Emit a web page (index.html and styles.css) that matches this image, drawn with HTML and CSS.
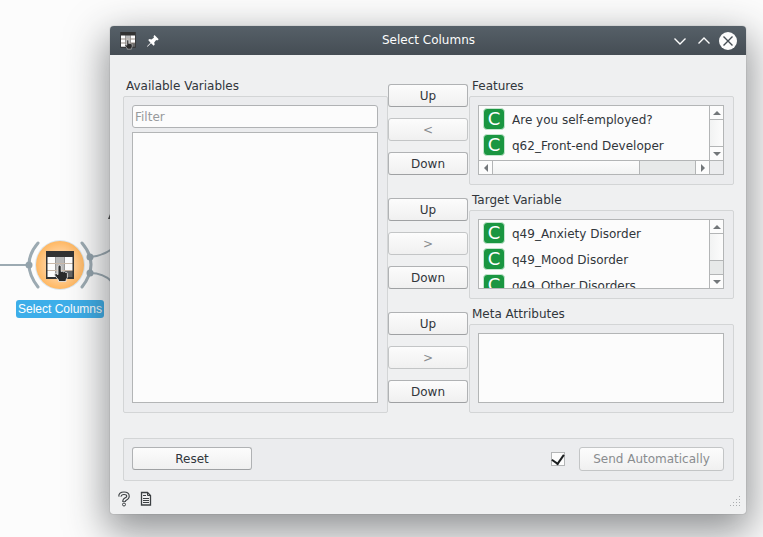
FILE: index.html
```
<!DOCTYPE html>
<html lang="en">
<head>
<meta charset="utf-8">
<title>Select Columns</title>
<link rel="stylesheet" href="styles.css">
</head>
<body>
<svg width="0" height="0" class="defs" aria-hidden="true">
  <symbol id="columns-icon" viewBox="0 0 28 32">
    <path fill="#333" d="M0 0h28v28H0z"/>
    <path fill="#fdfdfd" d="M1.500 6h8v6h-8zM1.500 13h8v6h-8zM1.500 20h8v6h-8zM18.500 6h8v6h-8zM18.500 13h8v6h-8z"/>
    <path fill="#b9b9b9" d="M10 6h8v20h-8z"/>
    <path fill="#666" d="M18.500 20h8v6h-8z"/>
    <path fill="#c9b8a8" d="M1.500 12h25v1h-25zM1.500 19h25v1h-25z"/>
    <path fill="#2b2b2b" stroke="#f4f4f4" stroke-width=".8" d="M12 15q1.500-1.800 3.200 0v5.500q1.200-.8 2.200.3 1.200-.7 2.200.6 1.400-.4 1.800.8v4.300L20 29v1.500h-7.500V29l-4-5q0-1.800 2-1.300l1.500 1z"/>
  </symbol>
</svg>

<div class="node">
  <svg class="node-art" width="112" height="90" viewBox="0 0 112 90" aria-hidden="true">
    <defs>
      <radialGradient id="disc"><stop offset="0" stop-color="#ffdcb2"/><stop offset="0.550" stop-color="#ffcf98"/><stop offset="1" stop-color="#ffb863"/></radialGradient>
    </defs>
    <g fill="none" stroke="#9caab2" stroke-width="2">
      <path d="M0 55h29M90 47q12-1 22-8M90 63q14 0 22 9"/>
      <path stroke-width="3" stroke-linecap="round" d="M38 33q-18 21 0 44M82 33q18 21 0 44"/>
    </g>
    <circle cx="29" cy="55" r="3.500" fill="#92a2ab"/>
    <circle cx="90" cy="47" r="3.500" fill="#92a2ab"/>
    <circle cx="90" cy="63" r="3.500" fill="#92a2ab"/>
    <circle cx="60" cy="55" r="25" fill="#dce6ee"/>
    <circle cx="60" cy="55" r="24" fill="url(#disc)"/>
    <use href="#columns-icon" x="46" y="41" width="28" height="32"/>
    <path d="M108 9l2-5h2v5z" fill="#444"/>
  </svg>
  <span class="node-label">Select Columns</span>
</div>

<main class="window">
  <header class="titlebar">
    <div class="tools">
      <svg width="16" height="18" viewBox="0 0 28 32" aria-hidden="true"><use href="#columns-icon"/></svg>
      <svg width="14" height="14" viewBox="0 0 14 14" aria-hidden="true"><path fill="#fff" d="M8.500 1L12.700 5.200 11.200 6.500 10.200 6 8.200 8.500 8.700 10.500 7.700 11.700 5 9.200 1.500 12.700 1 12.200 4.500 8.700 2.200 6 3.500 5 5.500 5.500 8 3.500 7.500 2.300z"/></svg>
    </div>
    <h1>Select Columns</h1>
    <div class="tools end">
      <button class="tool" aria-label="Minimize"><svg width="18" height="18" viewBox="0 0 18 18"><path d="M3.500 6.500L9 12l5.500-5.500"/></svg></button>
      <button class="tool" aria-label="Maximize"><svg width="18" height="18" viewBox="0 0 18 18"><path d="M3.500 11.500L9 6l5.500 5.500"/></svg></button>
      <button class="tool close" aria-label="Close"><svg width="18" height="18" viewBox="0 0 18 18"><circle cx="9" cy="9" r="9"/><path d="M4.500 4.500l9 9M13.500 4.500l-9 9"/></svg></button>
    </div>
  </header>

  <div class="content">
    <div class="columns">
      <section class="group available">
        <h2>Available Variables</h2>
        <div class="frame">
          <input class="filter" type="text" placeholder="Filter" aria-label="Filter">
          <div class="list"></div>
        </div>
      </section>

      <div class="moves"><button>Up</button><button disabled>&lt;</button><button>Down</button></div>
      <section class="group">
        <h2>Features</h2>
        <div class="frame">
          <div class="list scrolls both">
            <ul>
              <li><span class="kind">C</span>Are you self-employed?</li>
              <li><span class="kind">C</span>q62_Front-end Developer</li>
            </ul>
            <div class="vbar"><i class="arrow up"></i><i class="thumb"></i><i class="arrow down"></i></div>
            <div class="hbar"><i class="arrow left"></i><i class="thumb"></i><i class="track"></i><i class="arrow right"></i></div>
            <div class="corner"></div>
          </div>
        </div>
      </section>

      <div class="moves"><button>Up</button><button disabled>&gt;</button><button>Down</button></div>
      <section class="group">
        <h2>Target Variable</h2>
        <div class="frame">
          <div class="list scrolls">
            <ul>
              <li><span class="kind">C</span>q49_Anxiety Disorder</li>
              <li><span class="kind">C</span>q49_Mood Disorder</li>
              <li><span class="kind">C</span>q49_Other Disorders</li>
            </ul>
            <div class="vbar"><i class="arrow up"></i><i class="thumb"></i><i class="track"></i><i class="arrow down"></i></div>
          </div>
        </div>
      </section>

      <div class="moves"><button>Up</button><button disabled>&gt;</button><button>Down</button></div>
      <section class="group">
        <h2>Meta Attributes</h2>
        <div class="frame"><div class="list"></div></div>
      </section>
    </div>

    <div class="frame actions">
      <button class="reset">Reset</button>
      <input class="auto" type="checkbox" checked aria-label="Send automatically">
      <button class="send" disabled>Send Automatically</button>
    </div>
  </div>

  <footer class="status">
    <button class="tool" aria-label="Help"><svg width="12" height="16" viewBox="0 0 12 16"><path fill="none" stroke="#3c4043" stroke-width="3.600" d="M2 5.500q0-3.200 4-3.200t4 3q0 1.700-2.200 2.700Q6 8.800 6 11"/><path fill="none" stroke="#eff0f1" stroke-width="1.400" d="M2 5.500q0-3.200 4-3.200t4 3q0 1.700-2.200 2.700Q6 8.800 6 10.200"/><circle cx="6" cy="13.500" r="1.500" fill="#eff0f1" stroke="#3c4043"/></svg></button>
    <button class="tool" aria-label="Report"><svg width="12" height="16" viewBox="0 0 12 16" fill="none" stroke="#3c4043"><path stroke-width="1.300" d="M1.500 1.500h6l3 3v9.500h-9z"/><path d="M7.500 1.500v3h3M3 4.500h3M3 7.500h6M3 9.500h6M3 11.500h6"/></svg></button>
    <svg class="grip" width="12" height="12" viewBox="0 0 12 12" aria-hidden="true"><path fill="#aaadb0" d="M10 1h1v1h-1zM10 4h1v1h-1zM7 4h1v1H7zM10 7h1v1h-1zM7 7h1v1H7zM4 7h1v1H4zM10 10h1v1h-1zM7 10h1v1H7zM4 10h1v1H4zM1 10h1v1H1z"/></svg>
  </footer>
</main>
</body>
</html>
```

FILE: styles.css
```
* { box-sizing: border-box; }

body {
  margin: 0;
  padding: 26px 17px 23px 110px;
  background: #fcfcfc;
  color: #31363b;
  font: 12px/17px "DejaVu Sans", sans-serif;
  overflow: hidden;
}

button, input { font: inherit; color: inherit; }
h1, h2, ul { margin: 0; padding: 0; font-size: inherit; font-weight: normal; list-style: none; }
svg { display: block; }
.defs { position: absolute; }

/* Workflow canvas node */
.node { position: absolute; left: 0; top: 210px; width: 120px; }
.node-label {
  display: block;
  width: max-content;
  margin: 0 auto;
  padding: 0 2px;
  border-radius: 3px;
  background: #3daee9;
  color: #fff;
  font: 12px/18px "Liberation Sans", sans-serif;
}

/* Dialog window */
.window {
  position: relative;
  border-radius: 4px 4px 3px 3px;
  background: #eff0f1;
  box-shadow: 0 14px 38px 4px rgba(40, 44, 48, 0.5), 0 0 1px #777;
}

.titlebar {
  display: flex;
  align-items: center;
  height: 29px;
  padding: 0 9px 0 10px;
  border-radius: 4px 4px 0 0;
  background: linear-gradient(#566068, #454d54);
  color: #fcfcfc;
}
.tools { flex: 1; display: flex; align-items: center; gap: 10px; }
.tools.end { justify-content: flex-end; gap: 6px; }
.tool { padding: 0; border: 0; background: none; }
.titlebar .tool path { fill: none; stroke: #fcfcfc; stroke-width: 1.4; }
.titlebar .close circle { fill: #fcfcfc; }
.titlebar .close path { stroke: #454d54; }

.content { padding: 16px 12px 0 13px; }
.columns {
  display: grid;
  grid-template-columns: 1fr 81px 1fr;
  grid-auto-rows: 114px;
}
.available { grid-row: span 3; }

.group { display: flex; flex-direction: column; min-width: 0; }
.group h2 { padding: 7px 3px 1px; }
.frame {
  flex: 1;
  display: flex;
  flex-direction: column;
  gap: 4px;
  padding: 8px 9px 9px 8px;
  border: 1px solid #d3d5d6;
  border-radius: 2px;
  background: #ebecee;
}

.filter {
  width: 100%;
  height: 23px;
  padding: 0 2px;
  border: 1px solid #b0b2b4;
  border-radius: 3px;
  background: #fcfcfc;
}
.filter::placeholder { color: #989a9c; opacity: 1; }

.list { flex: 1; min-height: 0; border: 1px solid #b3b5b6; background: #fcfcfc; }
.scrolls { display: grid; grid-template: 68px / 1fr 14px; }
.both { grid-template-rows: 54px 14px; }
.list ul { overflow: hidden; }
.list li { display: flex; gap: 7px; height: 26px; padding-left: 4px; line-height: 28px; white-space: nowrap; }
.kind {
  width: 22px;
  height: 22px;
  margin-top: 2px;
  border: 1px solid #c5e6cf;
  border-radius: 4px;
  background: #1a9641;
  color: #fff;
  font-size: 18px;
  line-height: 20px;
  text-align: center;
}

.vbar, .hbar { display: flex; background: #e7e9e9; }
.vbar { flex-direction: column; border-left: 1px solid #b3b5b6; }
.hbar { border-top: 1px solid #b3b5b6; }
.thumb { flex: 1; background: linear-gradient(90deg, #f2f3f3, #fcfcfc); }
.hbar .thumb { flex: 147; background: linear-gradient(#fcfcfc, #f2f3f3); }
.hbar .track { flex: 56; border-left: 1px solid #b3b5b6; }
.vbar .track { height: 14px; border-top: 1px solid #b3b5b6; }
.arrow { flex: none; display: flex; align-items: center; justify-content: center; width: 14px; height: 14px; background: #fcfcfc; }
.vbar .arrow { width: 13px; }
.hbar .arrow { height: 13px; }
.arrow::before { content: ""; border: 4px solid transparent; }
.arrow.up { border-bottom: 1px solid #b3b5b6; }
.arrow.down { border-top: 1px solid #b3b5b6; }
.arrow.left { border-right: 1px solid #b3b5b6; }
.arrow.right { border-left: 1px solid #b3b5b6; }
.arrow.up::before { border-top: 0; border-bottom-color: #73777a; }
.arrow.down::before { border-bottom: 0; border-top-color: #73777a; }
.arrow.left::before { border-left: 0; border-right-color: #73777a; }
.arrow.right::before { border-right: 0; border-left-color: #73777a; }
.corner { border: solid #b3b5b6; border-width: 1px 0 0 1px; background: #ebecee; }

.moves { display: flex; flex-direction: column; gap: 11px; padding: 13px 1px 0 0; }
.moves button, .reset, .send {
  height: 23px;
  padding: 1px 0 0;
  border: 1px solid #b0b2b4;
  border-bottom-color: #9fa1a3;
  border-radius: 3px;
  background: linear-gradient(#fcfcfc, #f0f0f0);
}
.moves button:disabled, .send:disabled { border-color: #c3c5c6; color: #898c8f; }

.frame.actions { flex-direction: row; align-items: flex-start; gap: 14px; margin-top: 25px; }
.reset { width: 120px; }
.send { width: 145px; height: 24px; }
.auto {
  appearance: none;
  display: flex;
  align-items: center;
  justify-content: center;
  align-self: center;
  width: 14px;
  height: 14px;
  margin: 0 0 0 auto;
  border: 1px solid #b3b5b6;
  background: #fcfcfc;
}
.auto:checked::before {
  content: "";
  width: 6px;
  height: 10px;
  margin-bottom: 2px;
  border: solid #1b1e20;
  border-width: 0 2px 2px 0;
  transform: rotate(35deg);
}

.status { display: flex; align-items: center; gap: 10px; padding: 10px 5px 7px 8px; }
.grip { margin: 4px 0 0 auto; }
```
